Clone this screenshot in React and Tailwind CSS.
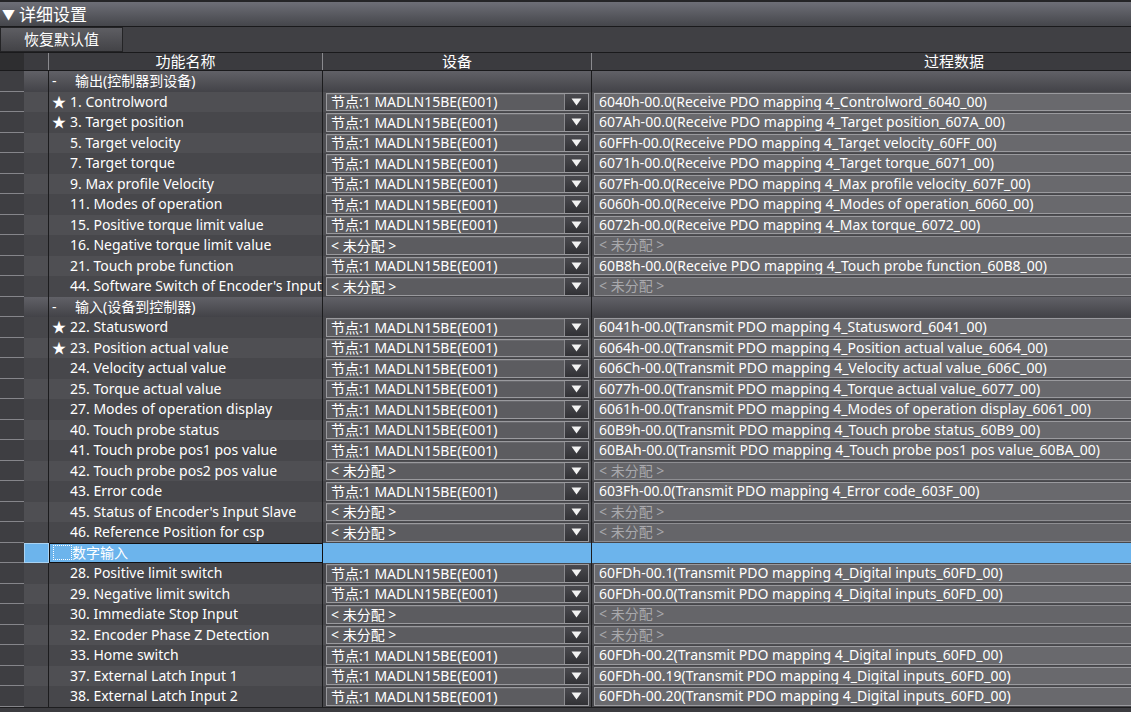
import React from "react";

const DEV = "节点:1 MADLN15BE(E001)";

const groups = [
  {
    label: "输出(控制器到设备)",
    items: [
      [true, "1. Controlword", DEV, "6040h-00.0(Receive PDO mapping 4_Controlword_6040_00)"],
      [true, "3. Target position", DEV, "607Ah-00.0(Receive PDO mapping 4_Target position_607A_00)"],
      [false, "5. Target velocity", DEV, "60FFh-00.0(Receive PDO mapping 4_Target velocity_60FF_00)"],
      [false, "7. Target torque", DEV, "6071h-00.0(Receive PDO mapping 4_Target torque_6071_00)"],
      [false, "9. Max profile Velocity", DEV, "607Fh-00.0(Receive PDO mapping 4_Max profile velocity_607F_00)"],
      [false, "11. Modes of operation", DEV, "6060h-00.0(Receive PDO mapping 4_Modes of operation_6060_00)"],
      [false, "15. Positive torque limit value", DEV, "6072h-00.0(Receive PDO mapping 4_Max torque_6072_00)"],
      [false, "16. Negative torque limit value", null, null],
      [false, "21. Touch probe function", DEV, "60B8h-00.0(Receive PDO mapping 4_Touch probe function_60B8_00)"],
      [false, "44. Software Switch of Encoder's Input", null, null],
    ],
  },
  {
    label: "输入(设备到控制器)",
    items: [
      [true, "22. Statusword", DEV, "6041h-00.0(Transmit PDO mapping 4_Statusword_6041_00)"],
      [true, "23. Position actual value", DEV, "6064h-00.0(Transmit PDO mapping 4_Position actual value_6064_00)"],
      [false, "24. Velocity actual value", DEV, "606Ch-00.0(Transmit PDO mapping 4_Velocity actual value_606C_00)"],
      [false, "25. Torque actual value", DEV, "6077h-00.0(Transmit PDO mapping 4_Torque actual value_6077_00)"],
      [false, "27. Modes of operation display", DEV, "6061h-00.0(Transmit PDO mapping 4_Modes of operation display_6061_00)"],
      [false, "40. Touch probe status", DEV, "60B9h-00.0(Transmit PDO mapping 4_Touch probe status_60B9_00)"],
      [false, "41. Touch probe pos1 pos value", DEV, "60BAh-00.0(Transmit PDO mapping 4_Touch probe pos1 pos value_60BA_00)"],
      [false, "42. Touch probe pos2 pos value", null, null],
      [false, "43. Error code", DEV, "603Fh-00.0(Transmit PDO mapping 4_Error code_603F_00)"],
      [false, "45. Status of Encoder's Input Slave", null, null],
      [false, "46. Reference Position for csp", null, null],
    ],
  },
  {
    label: "数字输入",
    selected: true,
    items: [
      [false, "28. Positive limit switch", DEV, "60FDh-00.1(Transmit PDO mapping 4_Digital inputs_60FD_00)"],
      [false, "29. Negative limit switch", DEV, "60FDh-00.0(Transmit PDO mapping 4_Digital inputs_60FD_00)"],
      [false, "30. Immediate Stop Input", null, null],
      [false, "32. Encoder Phase Z Detection", null, null],
      [false, "33. Home switch", DEV, "60FDh-00.2(Transmit PDO mapping 4_Digital inputs_60FD_00)"],
      [false, "37. External Latch Input 1", DEV, "60FDh-00.19(Transmit PDO mapping 4_Digital inputs_60FD_00)"],
      [false, "38. External Latch Input 2", DEV, "60FDh-00.20(Transmit PDO mapping 4_Digital inputs_60FD_00)"],
    ],
  },
];

function Tri() {
  return (
    <svg width="11" height="8" viewBox="0 0 11 8">
      <polygon points="0.5,0.5 10.5,0.5 5.5,7.5" fill="#f2f2f2" />
    </svg>
  );
}

function Dropdown({ value }) {
  return (
    <div className="h-full flex border border-[#9a9a9e] bg-[#5c5c60]">
      <div className="flex-1 flex items-center pl-[4px] text-white whitespace-nowrap overflow-hidden border-t border-[#6a6a6e]">
        {value ? value : "< 未分配 >"}
      </div>
      <div className="w-[24px] flex items-center justify-center bg-gradient-to-b from-[#4a4a4f] to-[#323236] border-l border-[#8a8a8e]">
        <Tri />
      </div>
    </div>
  );
}

function ProcBox({ value }) {
  return (
    <div
      className={
        value
          ? "h-full flex items-center pl-[4px] border border-[#9a9a9e] border-r-0 bg-[#69696d] text-white whitespace-nowrap overflow-hidden"
          : "h-full flex items-center pl-[4px] border border-[#8e8e92] border-r-0 bg-[#656569] text-[#a9a9ad] whitespace-nowrap overflow-hidden"
      }
    >
      {value ? value : "< 未分配 >"}
    </div>
  );
}

function ItemRow({ idx, star, name, dev, proc }) {
  const light = idx % 2 === 1;
  const bg = light ? "bg-[#4f4f53]" : "bg-[#47474b]";
  return (
    <div className="grid grid-cols-[24px_25px_274px_269px_1fr] h-[20.5px]">
      <div className="bg-[#3e3e42] border-b border-[#85858a]" />
      <div className={bg + " border-r border-[#1c1c1e]"} />
      <div className={bg + " border-r border-[#1c1c1e] flex items-center pl-[3px] text-white whitespace-nowrap overflow-hidden"}>
        <span className="w-[18px] shrink-0 text-[14px] leading-none">{star ? "★" : ""}</span>
        <span>{name}</span>
      </div>
      <div className={bg + " border-r border-[#1c1c1e] pl-[3px] pr-[2px] py-[1px]"}>
        <Dropdown value={dev} />
      </div>
      <div className={bg + " pl-[2px] py-[1px] overflow-hidden"}>
        <ProcBox value={proc} />
      </div>
    </div>
  );
}

function GroupRow({ label, selected }) {
  if (selected) {
    return (
      <div className="grid grid-cols-[24px_25px_274px_269px_1fr] h-[20.5px]">
        <div className="bg-[#3e3e42] border-b border-[#85858a]" />
        <div className="bg-[#6cb4ec] border border-[#a9d3f3]" />
        <div className="bg-[#6cb4ec] border border-[#101012] flex items-center pl-[3px] text-white whitespace-nowrap overflow-hidden">
          <span className="w-[19px] h-[15px] border border-dotted border-white shrink-0" />
          <span>{label}</span>
        </div>
        <div className="bg-[#6cb4ec] border-r border-[#1c1c1e]" />
        <div className="bg-[#6cb4ec]" />
      </div>
    );
  }
  return (
    <div className="grid grid-cols-[24px_25px_274px_269px_1fr] h-[20.5px]">
      <div className="bg-[#3e3e42] border-b border-[#85858a]" />
      <div className="bg-gradient-to-b from-[#616167] to-[#434348] border-r border-[#1c1c1e]" />
      <div className="bg-gradient-to-b from-[#616167] to-[#434348] border-r border-[#1c1c1e] flex items-center pl-[3px] text-white whitespace-nowrap overflow-hidden">
        <span className="w-[23px] shrink-0">-</span>
        <span>{label}</span>
      </div>
      <div className="bg-gradient-to-b from-[#616167] to-[#434348] border-r border-[#1c1c1e]" />
      <div className="bg-gradient-to-b from-[#616167] to-[#434348]" />
    </div>
  );
}

export default function App() {
  let idx = 0;
  const rows = [];
  groups.forEach((g, gi) => {
    rows.push(<GroupRow key={"g" + gi} label={g.label} selected={g.selected} />);
    idx++;
    g.items.forEach((it, ii) => {
      rows.push(
        <ItemRow key={"r" + gi + "-" + ii} idx={idx} star={it[0]} name={it[1]} dev={it[2]} proc={it[3]} />
      );
      idx++;
    });
  });

  return (
    <div
      className="w-[1131px] h-[712px] overflow-hidden bg-[#3c3c40] text-[14px] leading-none"
      style={{ fontFamily: '"Noto Sans", "Noto Sans CJK SC", sans-serif' }}
    >
      <div className="h-[2px] bg-[#252527]" />
      <div className="h-[24px] flex items-center pl-[2px] bg-gradient-to-b from-[#6e6f77] to-[#45464b] text-white text-[17px]">
        <span className="text-[13px] mr-[4px]">▼</span>
        <span>详细设置</span>
      </div>
      <div className="h-[1px] bg-[#1a1a1c]" />
      <div className="h-[25px] flex bg-[#404044]">
        <div className="w-[123px] flex items-center justify-center bg-gradient-to-b from-[#5e5e63] to-[#434347] border border-[#242426] text-white text-[15px]">
          恢复默认值
        </div>
      </div>
      <div className="grid grid-cols-[24px_25px_274px_269px_1fr] h-[18px] border-t border-[#1a1a1c] bg-[#3b3b3f] text-white text-[15px]">
        <div className="bg-[#2e2e30]" />
        <div className="border-r border-[#8a8a8e]" />
        <div className="border-r border-[#8a8a8e] flex items-center justify-center">功能名称</div>
        <div className="border-r border-[#8a8a8e] flex items-center justify-center">设备</div>
        <div className="flex items-center pl-[332px]">过程数据</div>
      </div>
      <div className="border-t border-[#1a1a1c]">{rows}</div>
      <div className="h-[1px] bg-[#1e1e20]" />
    </div>
  );
}
